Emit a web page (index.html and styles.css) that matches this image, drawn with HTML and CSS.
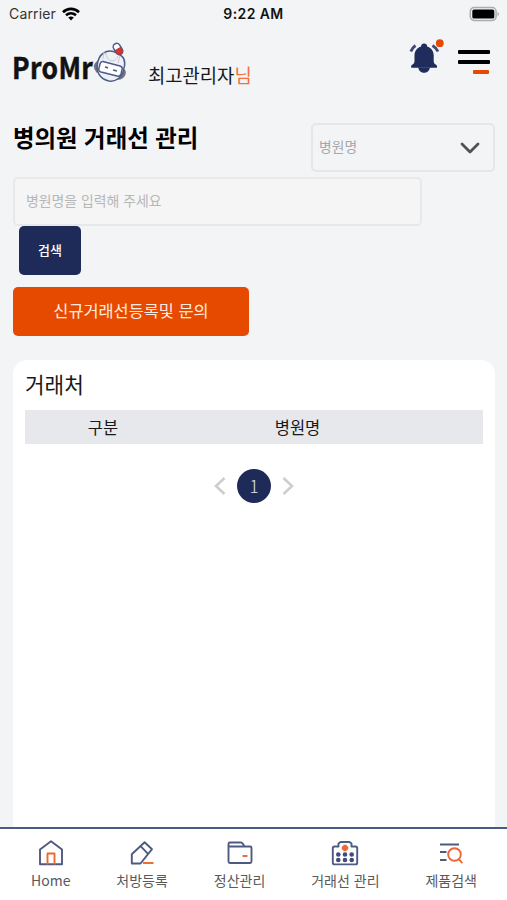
FILE: index.html
```html
<!DOCTYPE html>
<html lang="ko">
<head>
<meta charset="utf-8">
<meta name="viewport" content="width=device-width, initial-scale=1">
<title>병의원 거래선 관리</title>
<link rel="stylesheet" href="styles.css">
</head>
<body>
<div class="app">
  <div class="status">
    <div class="carrier">Carrier
      <svg width="18" height="14" viewBox="0 0 18 14" fill="none" stroke="#000" stroke-width="2.6"><path d="M1 5.2C5.5.8 12.500.8 17 5.200M4 8.300c3-2.700 7-2.700 10 0"/><path d="M6.200 10.500Q9 8.300 11.800 10.500L9 13.500z" fill="#000" stroke="none"/></svg>
    </div>
    <div class="time">9:22 AM</div>
    <svg class="battery" width="32" height="16" viewBox="0 0 32 16"><rect x="1.300" y="1.600" width="25.800" height="12.800" rx="3.800" fill="none" stroke="#aaacae" stroke-width="1.500"/><rect x="3.300" y="3.400" width="22" height="9.200" rx="1.700"/><path d="M28.600 5.700q2.400 2.300 0 4.600z" fill="#999"/></svg>
  </div>
  <header class="header">
    <div class="brand">
      <span class="wordmark">ProMr</span>
      <svg class="mascot" width="34" height="42" viewBox="0 0 34 42" fill="none" stroke="#4d5b88" stroke-width="1.500">
        <path d="M4 20q-5 4 0 10l3-1V19zM28 29q5-3 4 3-2 5-7 5z" fill="#75777b" stroke="#75777b"/>
        <path d="M5 19C8 9 17 7 24 11c7 3 9 8 7 15-1 9-8 14-15 13C7 37 2 30 5 19z" fill="#edf0f5"/>
        <path d="M13 11c0 8 9 11 12 3M11 10l-1 7M27 14l-2 7" stroke="#c6cbd6" stroke-width="1"/>
        <path d="M10 19.500l17 4.500q3 1 2 4l-1 4q-1 3-4 2L8 30q-3-1-2-4l1-4q1-3 3-2.500z" fill="#fff"/>
        <path d="M12 25l3 .800M20 28l4 1" stroke-width="1.800"/>
        <g transform="rotate(-31 25 7)"><rect x="21.500" y="1" width="7" height="12" rx="3.500" fill="#fff"/><path d="M22 7h6v2.500a3 3 0 0 1-6 0z" fill="#d9352c" stroke="#b5343a" stroke-width="1"/></g>
      </svg>
    </div>
    <div class="user">최고관리자<span>님</span></div>
    <svg class="bell" width="36" height="38" viewBox="0 0 36 38"><g fill="#1f2d5c"><path d="M13.100 7.500a3 3 0 0 1 6 0c4.400 1.300 6.600 5 6.600 9v5.500c0 2 .800 3 3 4.200q1.200 2.600-1 2.600H4.500q-2.300 0-1-2.600c2.200-1.200 3-2.200 3-4.200v-5.500c0-4 2.200-7.700 6.600-9z"/><path d="M10.300 28.500h11.600c-.700 7-10.900 7-11.600 0z"/></g><path d="M2.800 12.500Q4 9 7.500 6.500M24.500 6.500q4 2.500 5.500 6" fill="none" stroke="#3d4b76" stroke-width="2.800"/><circle cx="31.800" cy="4.200" r="3.900" fill="#e64a00"/></svg>
    <div class="menu"><i></i><i></i><i class="short"></i></div>
  </header>
  <section class="search">
    <div class="titlebar">
      <h1>병의원 거래선 관리</h1>
      <div class="select"><span>병원명</span><svg width="20" height="12" viewBox="0 0 20 12" fill="none" stroke="#505254" stroke-width="2.800" stroke-linecap="round" stroke-linejoin="round"><path d="M2 2l8 8 8-8"/></svg></div>
    </div>
    <input class="query" placeholder="병원명을 입력해 주세요" aria-label="병원명">
    <button class="btn find">검색</button>
    <button class="btn register">신규거래선등록및 문의</button>
  </section>
  <main class="card">
    <h2>거래처</h2>
    <div class="thead"><span>구분</span><span>병원명</span></div>
    <div class="pager">
      <svg width="12" height="20" viewBox="0 0 12 20"><path d="M10.500 2L2 10l8.500 8"/></svg>
      <b>1</b>
      <svg width="12" height="20" viewBox="0 0 12 20"><path d="M1.500 2l8.500 8-8.500 8"/></svg>
    </div>
  </main>
  <nav class="tabs">
    <a><svg width="28" height="28" viewBox="0 0 28 28"><path d="M3 10.500L14 2.200l11 8.300V25.200H3z"/><path class="o" d="M10.500 25.500v-11h7v11"/></svg>Home</a>
    <a><svg width="28" height="28" viewBox="0 0 28 28"><path d="M16.600 3.200l7.400 7-11.500 14.300H3.800v-9.300zM12.800 7.400l7 7.300"/><path class="o" d="M15 24h10.500"/></svg>처방등록</a>
    <a><svg width="28" height="28" viewBox="0 0 28 28"><path d="M2.500 7.500V5q0-1.500 1.500-1.500h11q1 0 2 1.500l1.500 2.500H24q1.500 0 1.500 1.500v13.500q0 1.500-1.500 1.500H4q-1.500 0-1.500-1.500V7.500h16"/><path class="o" d="M16.500 17h5"/></svg>정산관리</a>
    <a><svg width="28" height="28" viewBox="0 0 28 28"><path d="M7.500 7.500V4.500l2-1.500h9l2 1.500v3h4q1.700 0 1.700 1.700v14.500q0 1.700-1.700 1.700H3.500q-1.700 0-1.700-1.700V9.200q0-1.700 1.700-1.700z"/><g class="dots"><circle cx="7.300" cy="15.500" r="2.300"/><circle cx="14" cy="15.500" r="2.300"/><circle cx="20.700" cy="15.500" r="2.300"/><circle cx="7.300" cy="21" r="2.300"/><circle cx="14" cy="21" r="2.300"/><circle cx="20.700" cy="21" r="2.300"/></g><path class="o cross" d="M14 5.800v6.400M10.800 9h6.400"/></svg>거래선 관리</a>
    <a><svg width="28" height="28" viewBox="0 0 28 28"><path d="M3 5.500h19M3 13h6.500M3 21h6.500"/><circle class="o" cx="17.500" cy="15.500" r="6.300"/><path class="o" d="M21.800 20.200l3.500 3.900"/></svg>제품검색</a>
  </nav>
</div>
</body>
</html>
```
FILE: styles.css
```css
* { box-sizing: border-box; }
body {
  margin: 0;
  background: #f3f4f6;
  color: #17181a;
  font-family: "Noto Sans CJK KR", "Noto Sans", sans-serif;
}
.app { height: 900px; display: flex; flex-direction: column; overflow: hidden; }
.status {
  display: grid; grid-template-columns: 1fr auto 1fr; align-items: center;
  height: 27px; padding: 0 6px 0 9px;
  font-family: Inter, sans-serif; font-size: 14px; line-height: 27px;
}
.carrier { display: flex; align-items: center; gap: 6px; color: #333; letter-spacing: .15px; }
.time { margin-right: 3px; font-weight: 600; color: #111; letter-spacing: .4px; }
.battery { justify-self: end; }
.header { display: flex; align-items: flex-start; height: 83px; padding: 0 17px 0 12px; }
.brand { display: flex; width: 136px; padding-top: 15px; }
.wordmark {
  width: 81px; flex: none;
  font-family: "Noto Sans CJK KR", sans-serif;
  font-weight: 700; font-size: 30px; line-height: 48px; color: #111; letter-spacing: .4px;
  transform: scaleX(.88); transform-origin: 0 50%;
  -webkit-text-stroke: .5px #111;
}
.mascot { flex: none; }
.user { padding-top: 32px; font-size: 18.800px; line-height: 32px; white-space: nowrap; }
.user span { color: #f0713d; }
.bell { margin: 12px 14px 0 auto; }
.menu { display: flex; flex-direction: column; gap: 6px; width: 32px; padding-top: 23px; }
.menu i { height: 4px; border-radius: 1px; background: #000; }
.menu .short { width: 16px; margin-left: 15px; background: #e64a00; }
.search { display: flex; flex-direction: column; align-items: flex-start; padding: 13px 12px 0 13px; }
.titlebar { display: flex; justify-content: space-between; width: 100%; height: 54px; }
h1 { margin: -1px 0 0; font-size: 23.400px; line-height: 30px; font-weight: 700; color: #000; }
.select {
  display: flex; align-items: center; justify-content: space-between;
  width: 184px; height: 49px; padding: 0 13px 0 6px;
  border: 2px solid #e4e6e8; border-radius: 5px;
  font-size: 13.800px; color: #a6a8ab;
}
.select span { padding-bottom: 4px; }
.query {
  width: 409px; height: 49px; padding: 0 11px 4px;
  border: 2px solid #e6e8e9; border-radius: 5px; background: #f5f5f5;
  font: 13.900px "Noto Sans CJK KR", sans-serif;
}
.query::placeholder { color: #b6b7b8; opacity: 1; }
.btn { height: 49px; border: 0; border-radius: 5px; color: #fff; font-family: inherit; }
.find { width: 62px; margin: 0 0 0 6px; padding: 0 0 2px; background: #1e2b58; font-size: 13px; font-weight: 500; }
.register { width: 236px; margin-top: 12px; padding-bottom: 4px; background: #e64a00; font-size: 16.400px; color: #ffeadf; }
.card {
  flex: 1; margin: 24px 12px 0 13px; padding: 9px 12px 0;
  border-radius: 14px 14px 0 0; background: #fff;
}
h2 { margin: 0; font-size: 21.300px; line-height: 30px; font-weight: 400; }
.thead {
  display: grid; grid-template-columns: 156px 233px; height: 34px; margin-top: 11px;
  background: #e7e8eb; font-size: 16.500px; line-height: 34px; text-align: center;
}
.pager { display: flex; justify-content: center; align-items: center; gap: 11px; margin-top: 25px; }
.pager b {
  width: 34px; height: 34px; border-radius: 50%; background: #1e2b58; color: #e2e5ed;
  font-size: 17px; line-height: 33px; font-weight: 300; text-align: center;
}
.pager path { fill: none; stroke: #cecece; stroke-width: 2.600; }
.tabs {
  display: flex; justify-content: space-between; flex: none; height: 73px;
  padding: 10px 30px 0 31px; border-top: 2px solid #4b5a83; background: #fff;
}
.tabs a { display: flex; flex-direction: column; align-items: center; font-size: 14px; line-height: 27px; color: #58595b; white-space: nowrap; }
.tabs svg { fill: none; stroke: #4f5a83; stroke-width: 1.900; stroke-linejoin: round; }
.tabs .o { stroke: #ec6733; }
.tabs .dots { fill: #3f4b78; stroke: none; }
.tabs .cross { stroke-width: 3.400; }
```
